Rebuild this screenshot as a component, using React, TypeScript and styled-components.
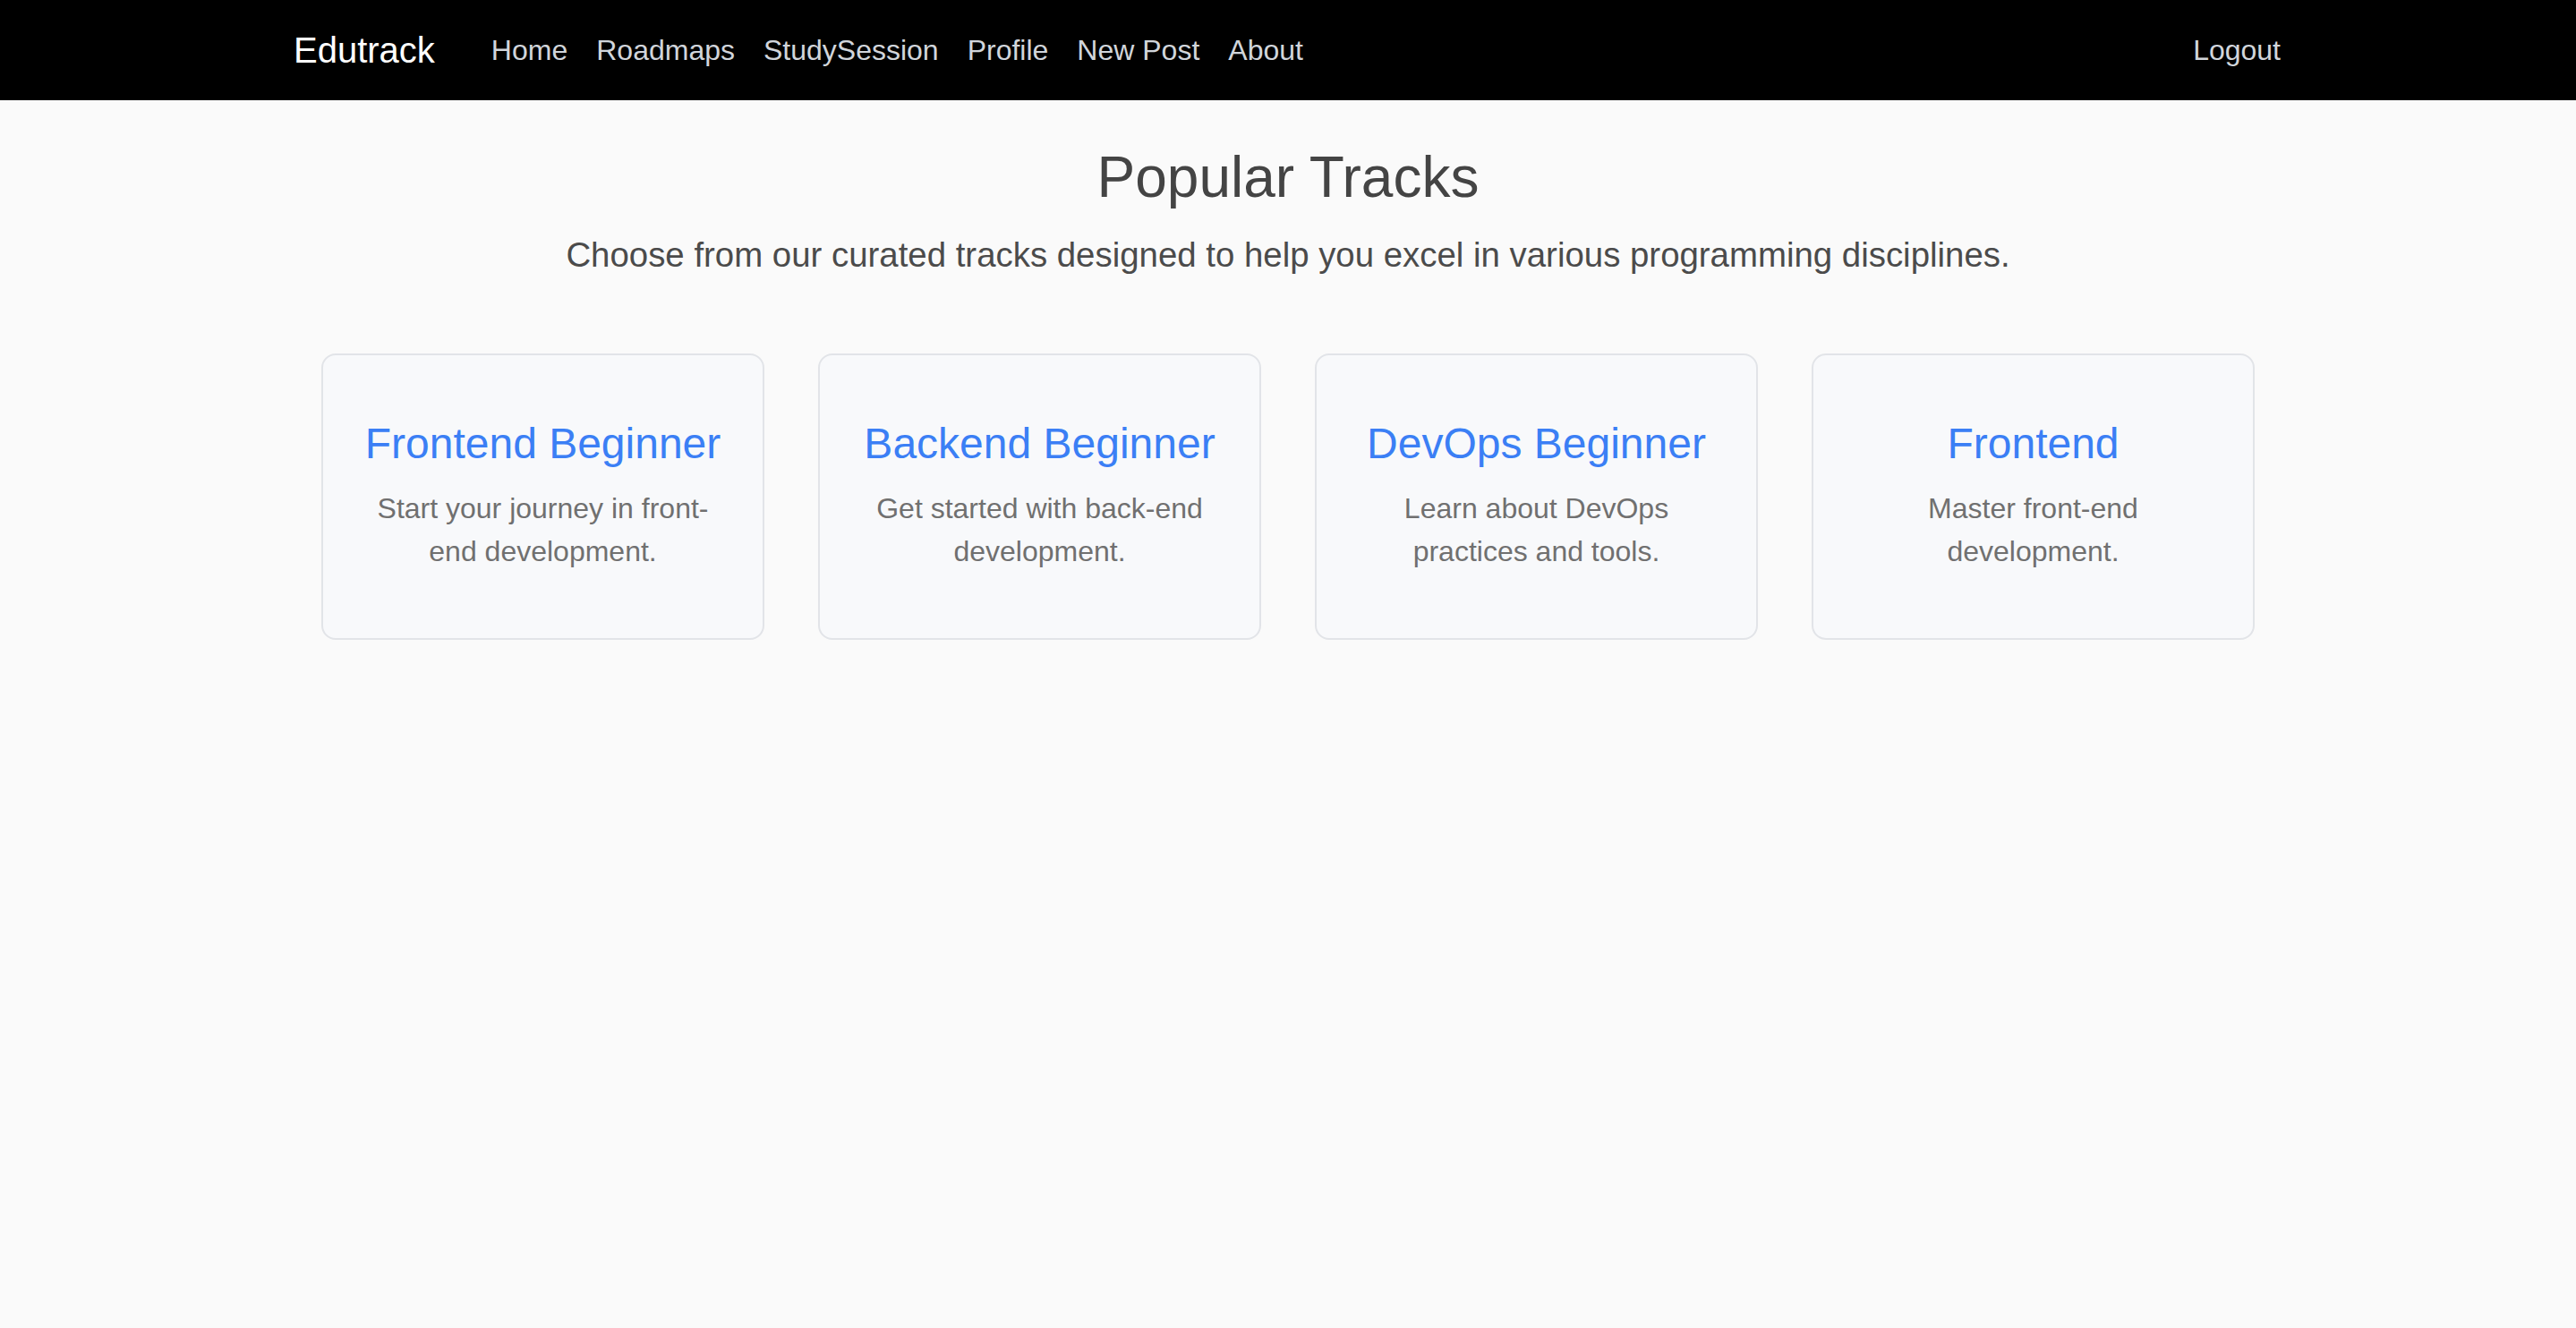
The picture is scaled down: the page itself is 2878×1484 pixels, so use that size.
import React from "react";
import styled, { createGlobalStyle } from "styled-components";

const GlobalStyle = createGlobalStyle`
  html, body {
    margin: 0;
    padding: 0;
    background: #fafafa;
    font-family: "Liberation Sans", Arial, Helvetica, sans-serif;
  }
  * { box-sizing: border-box; }
`;

const Page = styled.div`
  min-height: 1484px;
  background: #fafafa;
`;

const NavBar = styled.nav`
  height: 112px;
  background: #000;
  display: flex;
  align-items: center;
  padding: 0 314px 0 328px;
`;

const Brand = styled.a`
  font-size: 40px;
  line-height: 60px;
  color: #ffffff;
  text-decoration: none;
  margin-right: 47px;
`;

const NavList = styled.ul`
  display: flex;
  list-style: none;
  margin: 0;
  padding: 0;
  flex: 1;
`;

const NavLink = styled.a`
  display: block;
  font-size: 32px;
  line-height: 48px;
  padding: 0 16px;
  color: #d1d5db;
  text-decoration: none;
`;

const Main = styled.main`
  display: flex;
  flex-direction: column;
  align-items: center;
  padding-top: 48px;
`;

const Title = styled.h1`
  margin: 0;
  font-size: 64px;
  font-weight: 400;
  line-height: 77px;
  color: #444444;
`;

const Subtitle = styled.p`
  margin: 20px 0 0;
  font-size: 38.4px;
  line-height: 56px;
  color: #4b4b4b;
`;

const CardRow = styled.div`
  display: grid;
  grid-template-columns: repeat(4, 495px);
  gap: 60px;
  margin-top: 82px;
`;

const Card = styled.div`
  background: #f8f9fb;
  border: 2px solid #e2e4e8;
  border-radius: 16px;
  height: 320px;
  padding: 63px 44px 0;
  text-align: center;
`;

const CardTitle = styled.h2`
  margin: 0 0 12px;
  font-size: 48px;
  font-weight: 400;
  line-height: 72px;
  color: #3b7ff5;
  white-space: nowrap;
`;

const CardText = styled.p`
  margin: 0;
  font-size: 32px;
  line-height: 48px;
  color: #707070;
`;

const tracks = [
  { title: "Frontend Beginner", text: "Start your journey in front-end development." },
  { title: "Backend Beginner", text: "Get started with back-end development." },
  { title: "DevOps Beginner", text: "Learn about DevOps practices and tools." },
  { title: "Frontend", text: "Master front-end development." },
];

const links = ["Home", "Roadmaps", "StudySession", "Profile", "New Post", "About"];

export default function App() {
  return (
    <Page>
      <GlobalStyle />
      <NavBar>
        <Brand href="#">Edutrack</Brand>
        <NavList>
          {links.map((l) => (
            <li key={l}>
              <NavLink href="#">{l}</NavLink>
            </li>
          ))}
        </NavList>
        <NavLink href="#">Logout</NavLink>
      </NavBar>
      <Main>
        <Title>Popular Tracks</Title>
        <Subtitle>
          Choose from our curated tracks designed to help you excel in various programming disciplines.
        </Subtitle>
        <CardRow>
          {tracks.map((t) => (
            <Card key={t.title}>
              <CardTitle>{t.title}</CardTitle>
              <CardText>{t.text}</CardText>
            </Card>
          ))}
        </CardRow>
      </Main>
    </Page>
  );
}
